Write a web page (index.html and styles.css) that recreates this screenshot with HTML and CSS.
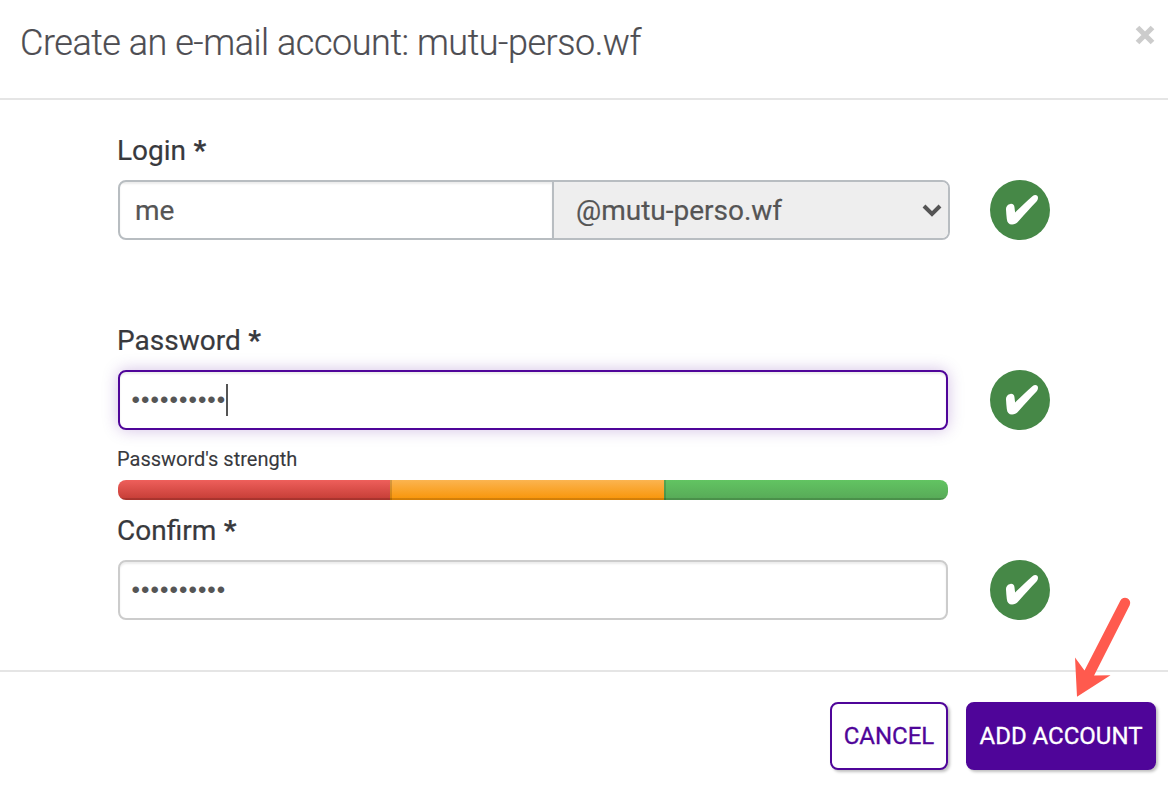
FILE: index.html
```html
<!DOCTYPE html>
<html lang="en">
<head>
<meta charset="utf-8">
<title>Create an e-mail account</title>
<link rel="stylesheet" href="styles.css">
</head>
<body>
<svg class="defs" aria-hidden="true">
  <symbol id="ok" viewBox="0 0 60 60">
    <circle cx="30" cy="30" r="30" fill="#468847"/>
    <path d="M16 29.500c-.2-3 1.500-5.200 4.400-5.600 2.500-.3 3.900 1 4.100 3.600l.6 4.900C31.300 26.800 37 20.700 42.400 16.200c2.600-2.100 5.600-1.100 5.600 1.500 0 1.500-.5 2.700-1.700 4-5.300 5.600-11.300 12.100-17.200 18.900-2.300 2.700-4.100 4-7.100 4-3.200 0-4.800-1.900-5.200-5.500-.4-3-.6-6.600-.8-9.600z" fill="#fff"/>
  </symbol>
</svg>
<div class="dialog">
  <header class="header">
    <h1 class="title">Create an e-mail account: mutu-perso.wf</h1>
    <svg class="close" viewBox="0 0 20 20" role="img" aria-label="Close"><path d="M2.500 2.500l15 15M17.500 2.500l-15 15"/></svg>
  </header>
  <main class="body">
    <section class="group login">
      <div class="label">Login <b>*</b></div>
      <div class="row">
        <div class="combo">
          <div class="combo-text">me</div>
          <div class="combo-select"><span>@mutu-perso.wf</span>
            <svg class="chevron" viewBox="0 0 20 14"><path d="M2 3l8 8 8-8"/></svg>
          </div>
        </div>
        <svg class="ok"><use href="#ok"/></svg>
      </div>
    </section>
    <section class="group">
      <div class="label">Password <b>*</b></div>
      <div class="row">
        <div class="field focused"><span class="dots">••••••••••</span><span class="caret"></span></div>
        <svg class="ok"><use href="#ok"/></svg>
      </div>
      <div class="hint">Password's strength</div>
      <div class="meter"><div class="bar weak"></div><div class="bar medium"></div><div class="bar strong"></div></div>
    </section>
    <section class="group">
      <div class="label">Confirm <b>*</b></div>
      <div class="row">
        <div class="field"><span class="dots">••••••••••</span></div>
        <svg class="ok"><use href="#ok"/></svg>
      </div>
    </section>
  </main>
  <footer class="footer">
    <button class="button cancel">CANCEL</button>
    <button class="button add">ADD ACCOUNT</button>
  </footer>
  <svg class="arrow" viewBox="0 0 60 104"><path d="M46.300 5.700a5.200 5.200 0 0 1 9.400 4.600L20.100 80.500 36.500 80.200 3 101.800 1 62.500 10.500 75.500z"/></svg>
</div>
</body>
</html>
```

FILE: styles.css
```css
* { box-sizing: border-box; }
body { margin: 0; background: #fff; font-family: Roboto, sans-serif; color: #38393d; -webkit-text-stroke: .2px; }
.defs { display: block; width: 0; height: 0; }
.dialog { position: relative; width: 1168px; height: 808px; overflow: hidden; }
.header { display: flex; justify-content: space-between; height: 100px; padding: 20px 13px 0 20px; border-bottom: 2px solid #e5e5e5; }
.title { margin: 0; font-size: 36px; line-height: 46px; font-weight: 300; letter-spacing: -.47px; color: #4d4d52; white-space: nowrap; }
.close { width: 20px; height: 20px; margin-top: 4.5px; fill: none; stroke: #ccc; stroke-width: 5.2; }
.body { display: flex; flex-direction: column; height: 570px; padding: 30px 118px 0; }
.group { display: flex; flex-direction: column; }
.login { margin-bottom: 80px; }
.label { height: 50px; margin-left: -1px; line-height: 41px; font-size: 28px; white-space: nowrap; }
.label b { margin-left: .5px; font-weight: 700; }
.row { display: flex; justify-content: space-between; height: 60px; }
.ok { width: 60px; height: 60px; }
.combo { display: flex; width: 832px; border: 2px solid #b8bdc1; border-radius: 8px; font-size: 28px; line-height: 57px; color: #555; overflow: hidden; }
.combo-text { width: 434px; padding-left: 15px; border-right: 2px solid #b8bdc1; box-shadow: inset 0 2px 2px rgba(0, 0, 0, .075); }
.combo-select { display: flex; flex: 1; align-items: center; justify-content: space-between; padding: 0 6px 0 22px; background: #eee; }
.chevron { width: 20px; height: 14px; fill: none; stroke: #555; stroke-width: 4; }
.field { display: flex; align-items: center; width: 830px; border: 2px solid #ccc; border-radius: 8px; padding-left: 11.5px; color: #555; box-shadow: inset 0 2px 2px rgba(0, 0, 0, .075); }
.focused { border-color: #4f0599; box-shadow: inset 0 2px 2px rgba(0, 0, 0, .075), 0 0 16px rgba(79, 5, 153, .25); }
.dots { font-family: "Liberation Sans", sans-serif; font-size: 24px; line-height: 38px; letter-spacing: 1.08px; -webkit-text-stroke: 0; }
.caret { width: 2px; height: 32px; background: #555; }
.hint { height: 50px; margin-left: -1px; padding-top: 14px; font-size: 20px; line-height: 30px; -webkit-text-stroke: .1px; }
.meter { display: flex; width: 830px; height: 20px; margin-bottom: 10px; border-radius: 8px; overflow: hidden; }
.bar { box-shadow: inset 0 -2px rgba(0, 0, 0, .15), inset 2px 0 rgba(0, 0, 0, .15); }
.weak { width: 272px; background: linear-gradient(#ee5f5b, #c43c35); box-shadow: inset 0 -2px rgba(0, 0, 0, .15); }
.medium { width: 274px; background: linear-gradient(#fbb450, #f89406); }
.strong { width: 284px; background: linear-gradient(#62c462, #57a957); }
.footer { display: flex; justify-content: flex-end; gap: 18px; padding: 30px 12px 0; border-top: 2px solid #e5e5e5; }
.button { height: 68px; padding: 0; border: 2px solid #4f0599; border-radius: 8px; font: 400 24px/64px Roboto, sans-serif; -webkit-text-stroke: .3px; white-space: nowrap; box-shadow: 2px 2px 3px rgba(0, 0, 0, .25); }
.cancel { width: 118px; background: #fff; color: #4f0599; }
.add { width: 190px; background: #4f0599; color: #fff; }
.arrow { position: absolute; left: 1074px; top: 595px; width: 60px; height: 104px; fill: #ff5a4e; }
```
